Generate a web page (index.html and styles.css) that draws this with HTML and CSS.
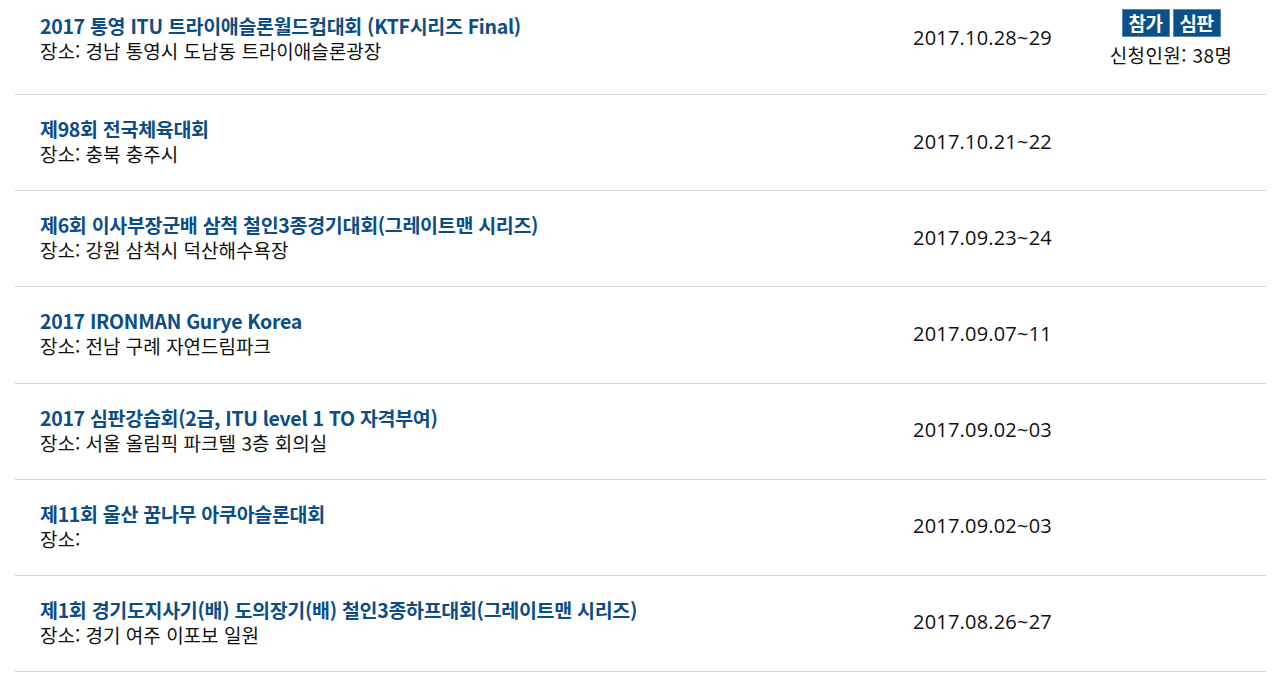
FILE: index.html
```html
<!DOCTYPE html>
<html lang="ko">
<head>
<meta charset="utf-8">
<link rel="stylesheet" href="styles.css">
</head>
<body>
<ul class="event-list">
  <li class="event">
    <div class="info">
      <a class="title">2017 통영 ITU 트라이애슬론월드컵대회 (KTF시리즈 Final)</a>
      <div class="place">장소: 경남 통영시 도남동 트라이애슬론광장</div>
    </div>
    <div class="date">2017.10.28~29</div>
    <div class="apply">
      <div class="btns"><span class="btn">참가</span><span class="btn">심판</span></div>
      <div class="count">신청인원: 38명</div>
    </div>
  </li>
  <li class="event">
    <div class="info">
      <a class="title">제98회 전국체육대회</a>
      <div class="place">장소: 충북 충주시</div>
    </div>
    <div class="date">2017.10.21~22</div>
    <div class="apply"></div>
  </li>
  <li class="event">
    <div class="info">
      <a class="title">제6회 이사부장군배 삼척 철인3종경기대회(그레이트맨 시리즈)</a>
      <div class="place">장소: 강원 삼척시 덕산해수욕장</div>
    </div>
    <div class="date">2017.09.23~24</div>
    <div class="apply"></div>
  </li>
  <li class="event">
    <div class="info">
      <a class="title">2017 IRONMAN Gurye Korea</a>
      <div class="place">장소: 전남 구례 자연드림파크</div>
    </div>
    <div class="date">2017.09.07~11</div>
    <div class="apply"></div>
  </li>
  <li class="event">
    <div class="info">
      <a class="title">2017 심판강습회(2급, ITU level 1 TO 자격부여)</a>
      <div class="place">장소: 서울 올림픽 파크텔 3층 회의실</div>
    </div>
    <div class="date">2017.09.02~03</div>
    <div class="apply"></div>
  </li>
  <li class="event">
    <div class="info">
      <a class="title">제11회 울산 꿈나무 아쿠아슬론대회</a>
      <div class="place">장소: </div>
    </div>
    <div class="date">2017.09.02~03</div>
    <div class="apply"></div>
  </li>
  <li class="event">
    <div class="info">
      <a class="title">제1회 경기도지사기(배) 도의장기(배) 철인3종하프대회(그레이트맨 시리즈)</a>
      <div class="place">장소: 경기 여주 이포보 일원</div>
    </div>
    <div class="date">2017.08.26~27</div>
    <div class="apply"></div>
  </li>
</ul>
</body>
</html>
```
FILE: styles.css
```css
html, body {
  margin: 0;
  padding: 0;
  background: #fff;
}
body {
  font-family: "Noto Sans CJK KR", "Noto Sans", sans-serif;
  color: #111;
  width: 1280px;
  height: 689px;
  overflow: hidden;
}
.event-list {
  list-style: none;
  margin: -15.8px 14px 0 15px;
  padding: 0;
}
.event {
  display: flex;
  align-items: center;
  padding: 21px 0 24.17px;
  border-bottom: 1px solid #d3d3d3;
}
.info {
  flex: 1;
  padding-left: 25px;
  display: flex;
  flex-direction: column;
  min-height: 50px;
  justify-content: center;
}
.title {
  color: #0c4d86;
  font-size: 19.5px;
  font-weight: 700;
  line-height: 25px;
  letter-spacing: -0.3px;
}
.place {
  font-size: 19px;
  line-height: 25px;
  letter-spacing: 0;
  color: #111;
}
.date {
  width: 193px;
  font-family: "Open Sans", "Noto Sans CJK KR", sans-serif;
  font-size: 20px;
  letter-spacing: 0.2px;
  color: #111;
}
.apply {
  width: 130px;
  margin-right: 30px;
  display: flex;
  flex-direction: column;
  align-items: center;
}
.apply:not(:empty) {
  padding-top: 4px;
}
.btns {
  display: flex;
  gap: 3px;
}
.btn {
  width: 48px;
  height: 28px;
  box-sizing: border-box;
  background: #0b5189;
  color: #fff;
  border: 1px solid #5b86b0;
  font-size: 19px;
  font-weight: 700;
  line-height: 26px;
  text-align: center;
  letter-spacing: -0.5px;
}
.count {
  margin-top: 4px;
  font-size: 19px;
  letter-spacing: 0.4px;
  line-height: 28.7px;
}
```
